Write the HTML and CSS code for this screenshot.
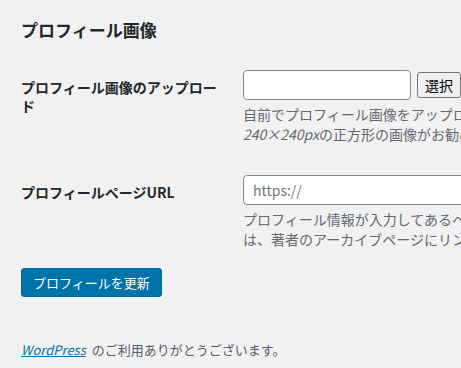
FILE: index.html
```html
<!DOCTYPE html>
<html lang="ja">
<head>
    <meta charset="UTF-8">
    <meta name="viewport" content="width=device-width, initial-scale=1.0">
    <title>プロフィール画像</title>
    <link rel="stylesheet" href="styles.css">
</head>
<body>
    <div class="wrap">
        <h2 class="section-title">プロフィール画像</h2>

        <form id="profileForm">
            <div class="form-row row-upload">
                <label class="row-label" for="avatar">プロフィール画像のアップロード</label>
                <div class="row-field">
                    <div class="upload-line">
                        <input type="text" id="avatar" class="avatar-input">
                        <button type="button" class="select-btn">選択</button>
                    </div>
                    <p class="description">自前でプロフィール画像をアップロードしてください。<br><em>240×240px</em>の正方形の画像がお勧めです。</p>
                </div>
            </div>

            <div class="form-row row-url">
                <label class="row-label" for="profile-url">プロフィールページURL</label>
                <div class="row-field">
                    <input type="url" id="profile-url" class="url-input" placeholder="https://">
                    <p class="description">プロフィール情報が入力してあるページのURLを入力します。入力しない場合<br>は、著者のアーカイブページにリンクします。</p>
                </div>
            </div>

            <div class="submit-row">
                <button type="submit" class="btn-primary">プロフィールを更新</button>
            </div>
        </form>

        <p class="footer-thanks"><a href="#">WordPress</a> のご利用ありがとうございます。</p>
    </div>
</body>
</html>
```

FILE: styles.css
```css
* {
    margin: 0;
    padding: 0;
    box-sizing: border-box;
}

html, body {
    overflow: hidden;
}

body {
    font-family: "Noto Sans CJK JP", "Noto Sans", sans-serif;
    background: #f1f1f1;
    color: #23282d;
    font-size: 13px;
    width: 461px;
    height: 368px;
}

.wrap {
    padding: 0 0 0 21px;
}

.section-title {
    font-size: 17px;
    font-weight: 700;
    line-height: 22px;
    padding-top: 19px;
}

.form-row {
    display: grid;
    grid-template-columns: 222px 600px;
}

.row-upload {
    margin-top: 29px;
}

.row-url {
    margin-top: 31px;
}

.row-label {
    font-size: 14px;
    font-weight: 600;
    line-height: 19px;
    padding-top: 8px;
    padding-right: 24px;
}

.upload-line {
    display: flex;
    align-items: center;
    gap: 6px;
}

.avatar-input,
.url-input {
    height: 30px;
    border: 1px solid #7e8993;
    border-radius: 4px;
    background: #fff;
    font-family: inherit;
    font-size: 14px;
    padding: 0 9px;
    color: #32373c;
}

.avatar-input {
    width: 168px;
}

.url-input {
    width: 400px;
}

.url-input::placeholder {
    color: #72777c;
}

.select-btn {
    height: 26px;
    padding: 0 7px;
    font-family: inherit;
    font-size: 14px;
    color: #000;
    background: #efefef;
    border: 1px solid #767676;
    border-radius: 3px;
}

.description {
    margin-top: 4px;
    font-size: 14px;
    line-height: 20px;
    color: #646970;
    white-space: nowrap;
}

.description em {
    font-style: italic;
}

.submit-row {
    margin-top: 19px;
}

.btn-primary {
    height: 29px;
    padding: 0 11px;
    background: #0073aa;
    color: #fff;
    border: 1px solid #006799;
    border-radius: 3px;
    font-family: inherit;
    font-size: 13px;
}

.footer-thanks {
    margin-top: 43px;
    font-size: 13px;
    line-height: 20px;
    color: #555d66;
}

.footer-thanks a {
    color: #0073aa;
    font-style: italic;
    margin-right: 3px;
}
```
